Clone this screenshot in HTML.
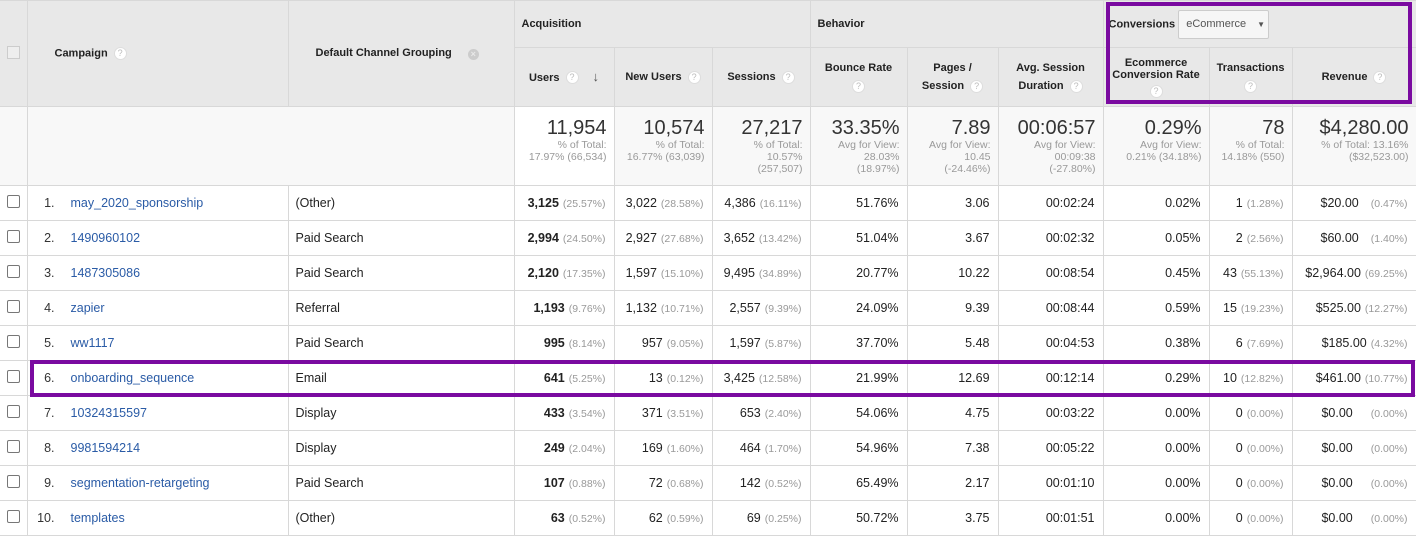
<!DOCTYPE html>
<html><head><meta charset="utf-8"><style>
*{box-sizing:border-box;margin:0;padding:0}
body{width:1416px;height:535px;overflow:hidden;background:#fff;font-family:"Liberation Sans",Arial,sans-serif;color:#222;position:relative}
table{border-collapse:collapse;table-layout:fixed;width:1416px;position:absolute;left:0;top:0}
td,th{border:1px solid #d8d8d8;font-size:12.5px;white-space:nowrap;overflow:hidden}
th{background:#e8e8e8;font-size:11px;font-weight:bold;color:#222;vertical-align:middle}
.grp{text-align:left;padding-left:7px;height:47px}
.h2{height:59px;text-align:center;line-height:18px}
.q{display:inline-block;width:13px;height:13px;border-radius:50%;background:#fff;border:1px solid #ddd;color:#bbb;font-size:9px;line-height:11px;text-align:center;font-weight:normal;vertical-align:middle;margin-left:6px}
.tot td{background:#f8f8f8;height:79px;text-align:right;vertical-align:top;padding:10px 7px 0 0;color:#222}
.big{font-size:20px;line-height:22px;color:#333}
.sm{font-size:10.5px;color:#999;line-height:12px}
.r td{height:35px;text-align:right;padding-right:8px}
.p{font-size:10.5px;color:#999;margin-left:4px}
.cb{display:inline-block;width:13px;height:13px;border:1px solid #777;border-radius:2px;background:#fff}
.r td.c0{text-align:center;padding:0;border-left:none}
.r td.c1{text-align:left;padding:0}
.num{display:inline-block;width:27px;text-align:right;color:#333}
a{color:#2a5ba6;text-decoration:none;margin-left:16px}
.r td.c2{text-align:left;padding-left:7px}
.b{font-weight:bold}
.box{position:absolute;border:4px solid #7a0aa0}
</style></head><body>
<table>
<colgroup><col style="width:27px"><col style="width:261px"><col style="width:226px"><col style="width:100px"><col style="width:98px"><col style="width:98px"><col style="width:97px"><col style="width:91px"><col style="width:105px"><col style="width:106px"><col style="width:83px"><col style="width:124px"></colgroup>
<tr><th rowspan="2" style="text-align:center;border-left:none"><span style="display:inline-block;width:13px;height:13px;border:1px solid #ccc;background:#eee"></span></th>
<th rowspan="2" style="text-align:left;padding-left:27px">Campaign<span class="q">?</span></th>
<th rowspan="2" style="text-align:left;padding-left:27px;vertical-align:middle"><span style="position:relative;top:-1px">Default Channel Grouping</span><span style="display:inline-block;width:11px;height:11px;border-radius:50%;background:#ccc;color:#e8e8e8;font-size:9px;line-height:11px;text-align:center;margin-left:16px">×</span></th>
<th colspan="3" class="grp">Acquisition</th><th colspan="3" class="grp">Behavior</th>
<th colspan="3" class="grp" style="padding-left:5px">Conversions <span style="display:inline-block;margin-left:0;width:91px;height:29px;border:1px solid #ccc;border-radius:2px;background:#f6f6f6;font-weight:normal;color:#555;font-size:11px;line-height:27px;padding-left:7px;vertical-align:middle">eCommerce <span style="font-size:8px;margin-left:8px">▼</span></span></th></tr>
<tr><th class="h2">Users<span class="q">?</span><span style="margin-left:14px;font-size:13px;color:#555">↓</span></th><th class="h2">New Users<span class="q">?</span></th><th class="h2">Sessions<span class="q">?</span></th>
<th class="h2">Bounce Rate<br><span class="q" style="margin:0">?</span></th><th class="h2">Pages /<br>Session<span class="q">?</span></th><th class="h2">Avg. Session<br>Duration<span class="q">?</span></th>
<th class="h2" style="line-height:12px">Ecommerce<br>Conversion Rate<br><span class="q" style="margin:4px 0 0">?</span></th><th class="h2">Transactions<br><span class="q" style="margin:0">?</span></th><th class="h2">Revenue<span class="q">?</span></th></tr>
<tr class="tot"><td style="border-left:none"></td><td colspan="2"></td>
<td style="background:#fff"><div class="big">11,954</div><div class="sm">% of Total:<br>17.97% (66,534)</div></td>
<td><div class="big">10,574</div><div class="sm">% of Total:<br>16.77% (63,039)</div></td>
<td><div class="big">27,217</div><div class="sm">% of Total:<br>10.57%<br>(257,507)</div></td>
<td><div class="big">33.35%</div><div class="sm">Avg for View:<br>28.03%<br>(18.97%)</div></td>
<td><div class="big">7.89</div><div class="sm">Avg for View:<br>10.45<br>(-24.46%)</div></td>
<td><div class="big">00:06:57</div><div class="sm">Avg for View:<br>00:09:38<br>(-27.80%)</div></td>
<td><div class="big">0.29%</div><div class="sm">Avg for View:<br>0.21% (34.18%)</div></td>
<td><div class="big">78</div><div class="sm">% of Total:<br>14.18% (550)</div></td>
<td><div class="big">$4,280.00</div><div class="sm">% of Total: 13.16%<br>($32,523.00)</div></td></tr>
<tr class="r"><td class="c0"><span class="cb"></span></td><td class="c1"><span class="num">1.</span><a>may_2020_sponsorship</a></td><td class="c2">(Other)</td><td><span class="b">3,125</span><span class="p">(25.57%)</span></td><td>3,022<span class="p">(28.58%)</span></td><td>4,386<span class="p">(16.11%)</span></td><td>51.76%</td><td>3.06</td><td>00:02:24</td><td>0.02%</td><td>1<span class="p">(1.28%)</span></td><td>$20.00<span class="p" style="margin-left:12px">(0.47%)</span></td></tr>
<tr class="r"><td class="c0"><span class="cb"></span></td><td class="c1"><span class="num">2.</span><a>1490960102</a></td><td class="c2">Paid Search</td><td><span class="b">2,994</span><span class="p">(24.50%)</span></td><td>2,927<span class="p">(27.68%)</span></td><td>3,652<span class="p">(13.42%)</span></td><td>51.04%</td><td>3.67</td><td>00:02:32</td><td>0.05%</td><td>2<span class="p">(2.56%)</span></td><td>$60.00<span class="p" style="margin-left:12px">(1.40%)</span></td></tr>
<tr class="r"><td class="c0"><span class="cb"></span></td><td class="c1"><span class="num">3.</span><a>1487305086</a></td><td class="c2">Paid Search</td><td><span class="b">2,120</span><span class="p">(17.35%)</span></td><td>1,597<span class="p">(15.10%)</span></td><td>9,495<span class="p">(34.89%)</span></td><td>20.77%</td><td>10.22</td><td>00:08:54</td><td>0.45%</td><td>43<span class="p">(55.13%)</span></td><td>$2,964.00<span class="p">(69.25%)</span></td></tr>
<tr class="r"><td class="c0"><span class="cb"></span></td><td class="c1"><span class="num">4.</span><a>zapier</a></td><td class="c2">Referral</td><td><span class="b">1,193</span><span class="p">(9.76%)</span></td><td>1,132<span class="p">(10.71%)</span></td><td>2,557<span class="p">(9.39%)</span></td><td>24.09%</td><td>9.39</td><td>00:08:44</td><td>0.59%</td><td>15<span class="p">(19.23%)</span></td><td>$525.00<span class="p">(12.27%)</span></td></tr>
<tr class="r"><td class="c0"><span class="cb"></span></td><td class="c1"><span class="num">5.</span><a>ww1117</a></td><td class="c2">Paid Search</td><td><span class="b">995</span><span class="p">(8.14%)</span></td><td>957<span class="p">(9.05%)</span></td><td>1,597<span class="p">(5.87%)</span></td><td>37.70%</td><td>5.48</td><td>00:04:53</td><td>0.38%</td><td>6<span class="p">(7.69%)</span></td><td>$185.00<span class="p">(4.32%)</span></td></tr>
<tr class="r"><td class="c0"><span class="cb"></span></td><td class="c1"><span class="num">6.</span><a>onboarding_sequence</a></td><td class="c2">Email</td><td><span class="b">641</span><span class="p">(5.25%)</span></td><td>13<span class="p">(0.12%)</span></td><td>3,425<span class="p">(12.58%)</span></td><td>21.99%</td><td>12.69</td><td>00:12:14</td><td>0.29%</td><td>10<span class="p">(12.82%)</span></td><td>$461.00<span class="p">(10.77%)</span></td></tr>
<tr class="r"><td class="c0"><span class="cb"></span></td><td class="c1"><span class="num">7.</span><a>10324315597</a></td><td class="c2">Display</td><td><span class="b">433</span><span class="p">(3.54%)</span></td><td>371<span class="p">(3.51%)</span></td><td>653<span class="p">(2.40%)</span></td><td>54.06%</td><td>4.75</td><td>00:03:22</td><td>0.00%</td><td>0<span class="p">(0.00%)</span></td><td>$0.00<span class="p" style="margin-left:18px">(0.00%)</span></td></tr>
<tr class="r"><td class="c0"><span class="cb"></span></td><td class="c1"><span class="num">8.</span><a>9981594214</a></td><td class="c2">Display</td><td><span class="b">249</span><span class="p">(2.04%)</span></td><td>169<span class="p">(1.60%)</span></td><td>464<span class="p">(1.70%)</span></td><td>54.96%</td><td>7.38</td><td>00:05:22</td><td>0.00%</td><td>0<span class="p">(0.00%)</span></td><td>$0.00<span class="p" style="margin-left:18px">(0.00%)</span></td></tr>
<tr class="r"><td class="c0"><span class="cb"></span></td><td class="c1"><span class="num">9.</span><a>segmentation-retargeting</a></td><td class="c2">Paid Search</td><td><span class="b">107</span><span class="p">(0.88%)</span></td><td>72<span class="p">(0.68%)</span></td><td>142<span class="p">(0.52%)</span></td><td>65.49%</td><td>2.17</td><td>00:01:10</td><td>0.00%</td><td>0<span class="p">(0.00%)</span></td><td>$0.00<span class="p" style="margin-left:18px">(0.00%)</span></td></tr>
<tr class="r"><td class="c0"><span class="cb"></span></td><td class="c1"><span class="num">10.</span><a>templates</a></td><td class="c2">(Other)</td><td><span class="b">63</span><span class="p">(0.52%)</span></td><td>62<span class="p">(0.59%)</span></td><td>69<span class="p">(0.25%)</span></td><td>50.72%</td><td>3.75</td><td>00:01:51</td><td>0.00%</td><td>0<span class="p">(0.00%)</span></td><td>$0.00<span class="p" style="margin-left:18px">(0.00%)</span></td></tr>
</table>
<div class="box" style="left:1106px;top:2px;width:306px;height:102px"></div>
<div class="box" style="left:30px;top:360px;height:37px;width:1385px"></div>
</body></html>
